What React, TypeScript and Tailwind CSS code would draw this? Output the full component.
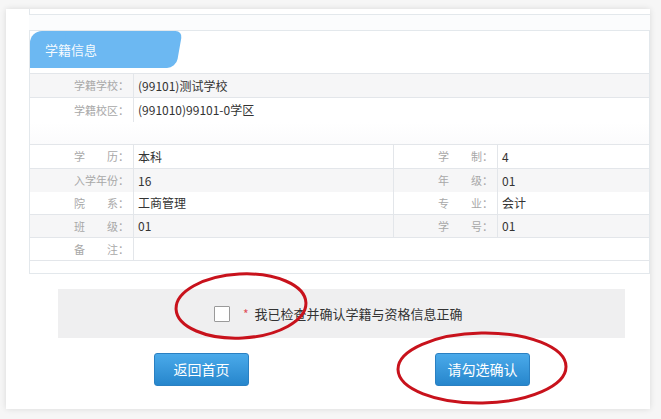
import React from "react";

const font = { fontFamily: '"Noto Sans CJK SC", "Noto Sans", sans-serif' };

type Cell = { label: string; value: string };

const schoolRows: Cell[] = [
  { label: "学籍学校：", value: "(99101)测试学校" },
  { label: "学籍校区：", value: "(991010)99101-0学区" },
];

const detailRows: { left: Cell; right?: Cell; shaded?: boolean; line?: boolean }[] = [
  { left: { label: "学\u3000\u3000历：", value: "本科" }, right: { label: "学\u3000\u3000制：", value: "4" }, line: true },
  { left: { label: "入学年份：", value: "16" }, right: { label: "年\u3000\u3000级：", value: "01" }, shaded: true },
  { left: { label: "院\u3000\u3000系：", value: "工商管理" }, right: { label: "专\u3000\u3000业：", value: "会计" }, line: true },
  { left: { label: "班\u3000\u3000级：", value: "01" }, right: { label: "学\u3000\u3000号：", value: "01" }, shaded: true, line: true },
  { left: { label: "备\u3000\u3000注：", value: "" }, line: true },
];

function Label({ text, className = "" }: { text: string; className?: string }) {
  return (
    <div className={`flex items-center justify-end border-r border-[#e3e6ea] pr-[4px] text-[11px] text-[#a8a8a8] ${className}`}>
      {text}
    </div>
  );
}

function Value({ text, className = "" }: { text: string; className?: string }) {
  return <div className={`flex items-center pl-[4px] text-[12px] text-[#333] ${className}`}>{text}</div>;
}

export default function App() {
  return (
    <div className="relative h-[419px] w-[661px] overflow-hidden bg-[#f6f6f6]" style={font}>
      <div className="ml-[6px] mt-[9px] flex h-[400px] w-[644px] flex-col bg-white pl-[23px] shadow-[0_0_6px_rgba(0,0,0,0.12)]">
        <div className="h-[6px] border-b border-l border-[#e3e8ec]" />
        <div className="h-[15px] bg-[#fbfcfd]" />

        <section className="flex h-[244px] flex-col border border-[#e3e8ec]">
          <div className="relative h-[37px] w-[152px]">
            <div className="absolute inset-y-0 left-0 w-[120px] rounded-tl-[12px] bg-[#6cb8f2]" />
            <div className="absolute inset-y-0 left-[30px] right-[6px] origin-bottom -skew-x-[10deg] rounded-br-[9px] rounded-tr-[7px] bg-[#6cb8f2]" />
            <span className="relative flex h-full items-center pl-[15px] text-[13px] text-white/95">学籍信息</span>
          </div>

          <div className="mt-[5px] border-t border-[#e3e6ea]">
            {schoolRows.map((row, i) => (
              <div
                key={row.label}
                className={`grid h-[24px] grid-cols-[104px_1fr] ${i === 0 ? "border-b border-[#e3e6ea] bg-[#f6f6f7]" : "h-[23px]"}`}
              >
                <Label text={row.label} />
                <Value text={row.value} />
              </div>
            ))}
          </div>

          <div className="h-[22px] bg-gradient-to-b from-white to-[#fbfbfc]" />

          <div className="border-t border-[#e3e6ea]">
            {detailRows.map((row) => (
              <div
                key={row.left.label}
                className={`grid h-[23px] first:h-[24px] ${row.right ? "grid-cols-[104px_260px_104px_1fr]" : "grid-cols-[104px_1fr]"} ${row.line ? "border-b border-[#e3e6ea]" : ""} ${row.shaded ? "bg-[#f6f6f7]" : "bg-white"}`}
              >
                <Label text={row.left.label} />
                <Value text={row.left.value} className={row.right ? "border-r border-[#e3e6ea]" : ""} />
                {row.right ? (
                  <>
                    <Label text={row.right.label} />
                    <Value text={row.right.value} />
                  </>
                ) : null}
              </div>
            ))}
          </div>
          <div className="flex-1 bg-white" />
        </section>

        <div className="ml-[29px] mt-[15px] flex h-[49px] w-[567px] items-center bg-[#efeff0] pl-[156px]">
          <span className="h-[16px] w-[16px] rounded-[1px] border border-[#9a9a9a] bg-white" />
          <span className="ml-[13px] text-[12px] text-[#e0505a]">*</span>
          <span className="ml-[6px] text-[13px] text-[#333]">我已检查并确认学籍与资格信息正确</span>
        </div>

        <div className="mt-[15px] flex pl-[125px]">
          <button className="h-[33px] w-[95px] rounded-[3px] border border-[#2a80c2] bg-gradient-to-b from-[#4aaaea] to-[#2686cc] text-[14px] text-white">
            返回首页
          </button>
          <button className="ml-[186px] h-[33px] w-[95px] rounded-[3px] border border-[#2a80c2] bg-gradient-to-b from-[#4aaaea] to-[#2686cc] text-[14px] text-white">
            请勾选确认
          </button>
        </div>
      </div>

      <svg className="pointer-events-none absolute inset-0" width="661" height="419" viewBox="0 0 661 419">
        <ellipse cx="241" cy="306" rx="65" ry="32" fill="none" stroke="#c8121c" strokeWidth="3" transform="rotate(-3 241 306)" />
        <ellipse cx="482" cy="368" rx="84" ry="35" fill="none" stroke="#c8121c" strokeWidth="3" transform="rotate(-1 482 368)" />
      </svg>
    </div>
  );
}
